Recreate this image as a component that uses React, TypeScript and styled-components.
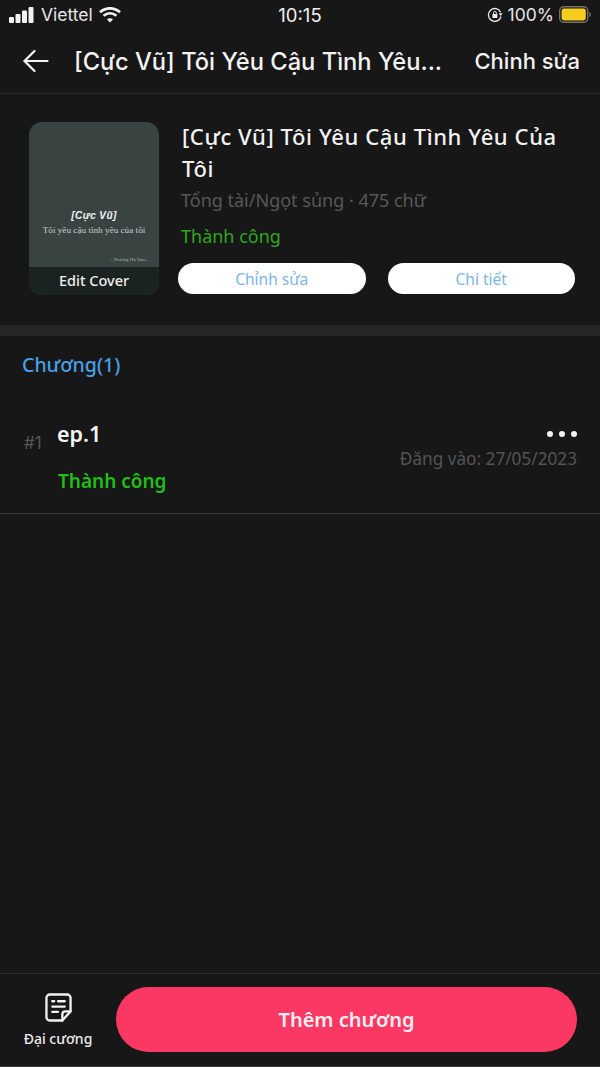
import React from "react";
import styled, { createGlobalStyle } from "styled-components";

const Global = createGlobalStyle`
  html, body { margin: 0; padding: 0; background: #171717; }
  * { box-sizing: border-box; }
  #root { width: 600px; height: 1067px; }
`;

const Page = styled.div`
  width: 600px;
  height: 1067px;
  display: flex;
  flex-direction: column;
  background: #171717;
  color: #fff;
  font-family: "Noto Sans", "Liberation Sans", sans-serif;
  overflow: hidden;
`;

const StatusBar = styled.div`
  height: 32px;
  flex: none;
  display: grid;
  grid-template-columns: 1fr auto 1fr;
  align-items: center;
  padding: 0 9px 3px 9px;
  font-family: Inter, "Liberation Sans", sans-serif;
  font-size: 17.5px;
  color: #e6e6e6;
`;
const StatusLeft = styled.div`
  display: flex;
  align-items: center;
  gap: 6px;
`;
const StatusRight = styled.div`
  display: flex;
  align-items: center;
  justify-content: flex-end;
  gap: 5px;
`;
const Clock = styled.div`
  font-size: 18.5px;
  color: #f0f0f0;
  font-weight: 400;
`;

const NavBar = styled.div`
  height: 62px;
  flex: none;
  display: flex;
  align-items: center;
  padding: 0 20px 3px 23px;
  border-bottom: 1px solid #2a2a2a;
  font-family: Inter, "Liberation Sans", sans-serif;
`;
const NavTitle = styled.div`
  flex: 1;
  margin-left: 25px;
  font-size: 23.7px;
  font-weight: 500;
  white-space: nowrap;
  color: #f2f2f2;
`;
const NavAction = styled.div`
  font-size: 22px;
  font-weight: 500;
  color: #f2f2f2;
`;

const BookSection = styled.section`
  height: 242px;
  flex: none;
  display: flex;
  padding: 28px 25px 0 29px;
  border-bottom: 11px solid #262626;
`;
const Cover = styled.div`
  width: 130px;
  height: 173px;
  flex: none;
  border-radius: 13px;
  overflow: hidden;
  background: #394442;
  display: flex;
  flex-direction: column;
`;
const CoverArt = styled.div`
  flex: 1;
  display: flex;
  flex-direction: column;
  padding-top: 88px;
  font-family: "Liberation Serif", serif;
  text-align: center;
`;
const CoverHeading = styled.div`
  font-family: "Liberation Sans", sans-serif;
  font-size: 10px;
  font-weight: 700;
  font-style: italic;
  letter-spacing: 0.4px;
  color: #f4f4f4;
`;
const CoverSub = styled.div`
  margin-top: 4px;
  font-size: 9.2px;
  color: #c9cdcb;
  white-space: nowrap;
`;
const CoverCredit = styled.div`
  margin-top: 22px;
  padding-right: 10px;
  font-size: 5px;
  text-align: right;
  color: #b0b5b3;
`;
const EditBand = styled.div`
  height: 28px;
  flex: none;
  padding-bottom: 2px;
  background: #1b2321;
  font-size: 14.5px;
  font-weight: 500;
  color: #efefef;
  display: flex;
  align-items: center;
  justify-content: center;
`;
const BookInfo = styled.div`
  flex: 1;
  min-width: 0;
  margin-left: 19px;
  margin-top: -2px;
  display: flex;
  flex-direction: column;
`;
const BookTitle = styled.div`
  padding-left: 4px;
  font-size: 22px;
  letter-spacing: 0.6px;
  line-height: 32px;
  font-weight: 500;
  color: #f2f2f2;
`;
const BookMeta = styled.div`
  margin-top: 2px;
  padding-left: 3px;
  font-size: 18px;
  line-height: 28px;
  color: #585858;
`;
const BookStatus = styled.div`
  margin-top: 8px;
  padding-left: 3px;
  font-size: 18px;
  line-height: 28px;
  color: #2fa81c;
`;
const ButtonRow = styled.div`
  margin-top: 13px;
  display: flex;
  gap: 22px;
`;
const PillButton = styled.div`
  width: 187.5px;
  height: 31px;
  border-radius: 16px;
  background: #fff;
  color: #7eb6e6;
  font-size: 15.5px;
  display: flex;
  align-items: center;
  justify-content: center;
`;

const ChapterSection = styled.section`
  flex: 1;
  display: flex;
  flex-direction: column;
`;
const ChapterHeading = styled.div`
  padding: 15px 0 0 22px;
  font-size: 19.5px;
  line-height: 28px;
  font-weight: 500;
  color: #4a9fe6;
`;
const ChapterRow = styled.div`
  margin-top: 30px;
  height: 105px;
  display: flex;
  padding: 0 23px 0 24px;
  border-bottom: 1px solid #3a3a3a;
`;
const ChapterIndex = styled.div`
  width: 33px;
  flex: none;
  padding-top: 23px;
  font-size: 17px;
  line-height: 22px;
  color: #555;
  font-family: Inter, sans-serif;
`;
const ChapterMain = styled.div`
  flex: 1;
  display: flex;
  flex-direction: column;
`;
const ChapterName = styled.div`
  font-size: 21.5px;
  line-height: 30px;
  padding-top: 10px;
  box-sizing: content-box;
  font-weight: 600;
  color: #f4f4f4;
`;
const ChapterStatus = styled.div`
  margin-top: 18px;
  padding-left: 1px;
  font-size: 19px;
  line-height: 28px;
  font-weight: 600;
  color: #1fbf17;
`;
const ChapterSide = styled.div`
  display: flex;
  flex-direction: column;
  align-items: flex-end;
`;
const Dots = styled.div`
  display: flex;
  gap: 6px;
  margin-top: 22px;
`;
const Dot = styled.span`
  width: 6px;
  height: 6px;
  border-radius: 50%;
  background: #f2f2f2;
`;
const ChapterDate = styled.div`
  margin-top: 10px;
  font-size: 17.2px;
  line-height: 24px;
  color: #545454;
  font-family: "Noto Sans", sans-serif;
`;

const BottomBar = styled.footer`
  height: 94px;
  flex: none;
  display: flex;
  align-items: flex-start;
  padding: 13px 23px 0 23px;
  border-top: 1px solid #2c2c2c;
  border-bottom: 1px solid #383838;
`;
const OutlineTab = styled.div`
  width: 70px;
  flex: none;
  display: flex;
  flex-direction: column;
  align-items: center;
  font-size: 14px;
  font-weight: 500;
  color: #ececec;
  padding-top: 6px;
  white-space: nowrap;
`;
const OutlineLabel = styled.span`
  margin-top: 7px;
  line-height: 20px;
`;
const AddButton = styled.div`
  margin-left: 23px;
  width: 461px;
  height: 65px;
  border-radius: 33px;
  background: #fb3764;
  color: #fbeef1;
  font-size: 20px;
  font-weight: 600;
  display: flex;
  align-items: center;
  justify-content: center;
`;

const Signal = () => (
  <svg width="26" height="16" viewBox="0 0 26 16" fill="#f2f2f2">
    <rect x="0" y="10" width="5" height="6" rx="1" />
    <rect x="6.5" y="7" width="5" height="9" rx="1" />
    <rect x="13" y="3.5" width="5" height="12.5" rx="1" />
    <rect x="19.5" y="0" width="5" height="16" rx="1" />
  </svg>
);
const Wifi = () => (
  <svg width="22" height="16" viewBox="0 0 22 16" fill="none" stroke="#f2f2f2" strokeWidth="2.7">
    <path d="M1 5.2C6.8 0 15.2 0 21 5.2" />
    <path d="M4.6 8.8C8.4 5.6 13.6 5.6 17.4 8.8" />
    <path d="M11 15.6L7.9 12.2C9.8 10.8 12.2 10.8 14.1 12.2Z" fill="#f2f2f2" stroke="none" />
  </svg>
);
const RotationLock = () => (
  <svg width="16" height="16" viewBox="0 0 16 16" fill="none">
    <path d="M13.6 5.2A6.4 6.4 0 1 0 14 9.5" stroke="#ededed" strokeWidth="1.3" />
    <path d="M11.6 6.2L15.6 6.2L13.8 8.9Z" fill="#ededed" />
    <rect x="5.4" y="7" width="5" height="4" rx="0.7" fill="#ededed" />
    <path d="M6.5 7V5.8A1.4 1.4 0 0 1 9.3 5.8V7" stroke="#ededed" strokeWidth="1" />
  </svg>
);
const Battery = () => (
  <svg width="32" height="17" viewBox="0 0 32 17">
    <rect x="0.7" y="0.7" width="28" height="15.6" rx="4" fill="none" stroke="#77706a" strokeWidth="1.4" />
    <rect x="2.6" y="2.6" width="24.2" height="11.8" rx="2.4" fill="#f6cd1c" />
    <path d="M30.4 6v5c.9-.3 1.5-1.4 1.5-2.5S31.3 6.3 30.4 6z" fill="#77706a" />
  </svg>
);
const BackArrow = () => (
  <svg width="26" height="24" viewBox="0 0 26 24" fill="none" stroke="#f4f4f4" strokeWidth="2.2" strokeLinecap="round" strokeLinejoin="round">
    <path d="M1.5 12H24.5" />
    <path d="M11.5 2L1.5 12L11.5 22" />
  </svg>
);
const OutlineIcon = () => (
  <svg width="27" height="29" viewBox="0 0 28 30" fill="none" stroke="#f2f2f2" strokeWidth="2.4" strokeLinecap="round" strokeLinejoin="round">
    <path d="M5 1.5H23A3.5 3.5 0 0 1 26.5 5V19L18 28.5H5A3.5 3.5 0 0 1 1.5 25V5A3.5 3.5 0 0 1 5 1.5Z" />
    <path d="M26.5 19H21A3 3 0 0 0 18 22V28.5" />
    <path d="M7.5 8.5H9.5M13.5 8.5H20.5M7.5 14H20.5M7.5 19.5H13.5" />
  </svg>
);

export default function App() {
  return (
    <Page>
      <Global />
      <StatusBar>
        <StatusLeft>
          <Signal />
          <span>Viettel</span>
          <Wifi />
        </StatusLeft>
        <Clock>10:15</Clock>
        <StatusRight>
          <RotationLock />
          <span>100%</span>
          <Battery />
        </StatusRight>
      </StatusBar>
      <NavBar>
        <BackArrow />
        <NavTitle>[Cực Vũ] Tôi Yêu Cậu Tình Yêu...</NavTitle>
        <NavAction>Chỉnh sửa</NavAction>
      </NavBar>
      <BookSection>
        <Cover>
          <CoverArt>
            <CoverHeading>[Cực Vũ]</CoverHeading>
            <CoverSub>Tôi yêu cậu tình yêu của tôi</CoverSub>
            <CoverCredit>...Trương Hà Dao...</CoverCredit>
          </CoverArt>
          <EditBand>Edit Cover</EditBand>
        </Cover>
        <BookInfo>
          <BookTitle>[Cực Vũ] Tôi Yêu Cậu Tình Yêu Của Tôi</BookTitle>
          <BookMeta>Tổng tài/Ngọt sủng · 475 chữ</BookMeta>
          <BookStatus>Thành công</BookStatus>
          <ButtonRow>
            <PillButton>Chỉnh sửa</PillButton>
            <PillButton>Chi tiết</PillButton>
          </ButtonRow>
        </BookInfo>
      </BookSection>
      <ChapterSection>
        <ChapterHeading>Chương(1)</ChapterHeading>
        <ChapterRow>
          <ChapterIndex>#1</ChapterIndex>
          <ChapterMain>
            <ChapterName>ep.1</ChapterName>
            <ChapterStatus>Thành công</ChapterStatus>
          </ChapterMain>
          <ChapterSide>
            <Dots>
              <Dot />
              <Dot />
              <Dot />
            </Dots>
            <ChapterDate>Đăng vào: 27/05/2023</ChapterDate>
          </ChapterSide>
        </ChapterRow>
      </ChapterSection>
      <BottomBar>
        <OutlineTab>
          <OutlineIcon />
          <OutlineLabel>Đại cương</OutlineLabel>
        </OutlineTab>
        <AddButton>Thêm chương</AddButton>
      </BottomBar>
    </Page>
  );
}
